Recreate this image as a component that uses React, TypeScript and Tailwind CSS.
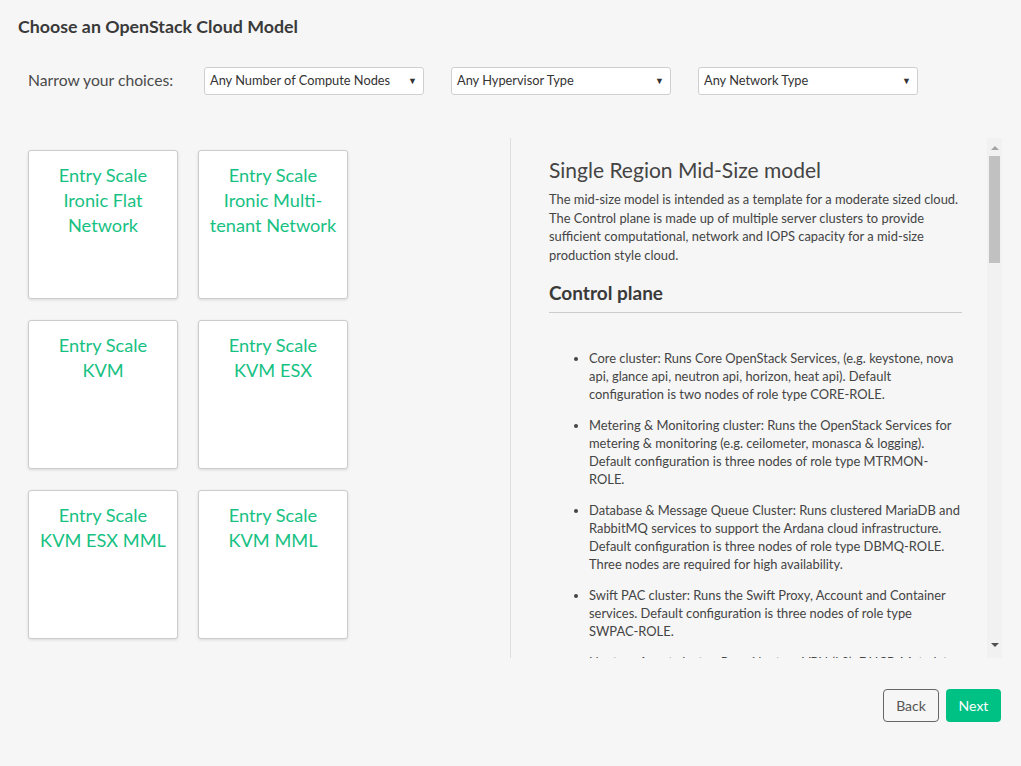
import { useState } from 'react';

const models = [
    'Entry Scale Ironic Flat Network',
    'Entry Scale Ironic Multi-tenant Network',
    'Entry Scale KVM',
    'Entry Scale KVM ESX',
    'Entry Scale KVM ESX MML',
    'Entry Scale KVM MML',
];

const filters = ['Any Number of Compute Nodes', 'Any Hypervisor Type', 'Any Network Type'];

const controlPlane = [
    'Core cluster: Runs Core OpenStack Services, (e.g. keystone, nova api, glance api, neutron api, horizon, heat api). Default configuration is two nodes of role type CORE-ROLE.',
    'Metering & Monitoring cluster: Runs the OpenStack Services for metering & monitoring (e.g. ceilometer, monasca & logging). Default configuration is three nodes of role type MTRMON-ROLE.',
    'Database & Message Queue Cluster: Runs clustered MariaDB and RabbitMQ services to support the Ardana cloud infrastructure. Default configuration is three nodes of role type DBMQ-ROLE. Three nodes are required for high availability.',
    'Swift PAC cluster: Runs the Swift Proxy, Account and Container services. Default configuration is three nodes of role type SWPAC-ROLE.',
    'Neutron Agent cluster: Runs Neutron VPN (L3), DHCP, Metadata and OpenVswitch agents. Default configuration is two nodes of role type NEUTRON-ROLE.',
];

const resources = [
    'Compute: Runs the KVM hypervisor and the nova-compute service. Default configuration is one node of role type COMPUTE-ROLE.',
    'Swift Object: Runs the Swift object server. Default configuration is three nodes of role type SWOBJ-ROLE.',
];

function Section({ title, items }: { title: string; items: string[] }) {
    return (
        <>
            <h3 className="mt-[17px] border-b border-[#cccccc] pb-[7px] text-[19px] font-bold leading-[24px] text-[#3a3a3a]">{title}</h3>
            <ul className="mt-[36px] list-disc pl-[40px] text-[12.9px] leading-[18px] text-[#444]">
                {items.map((c) => (
                    <li key={c} className="mb-[13px]">{c}</li>
                ))}
            </ul>
        </>
    );
}

export default function App() {
    const [selected, setSelected] = useState<string | null>(null);

    return (
        <div className="h-screen w-full overflow-hidden bg-[#f6f6f6] text-[#444]" style={{ fontFamily: 'Lato, "Open Sans", sans-serif' }}>
            {/* Header */}
            <h1 className="pl-[18px] pt-[15px] text-[17.8px] font-bold leading-[22px] text-[#3a3a3a]">Choose an OpenStack Cloud Model</h1>

            {/* Filters */}
            <div className="mt-[30px] flex h-[28px] items-center pl-[28px]">
                <span className="w-[176px] text-[15.7px] text-[#4a4a4a]">Narrow your choices:</span>
                <div className="flex gap-[27px]">
                    {filters.map((f) => (
                        <div key={f} className="flex h-[28px] w-[220px] items-center justify-between rounded-[3px] border border-[#cfcfcf] bg-white pl-[5px] pr-[6px] text-[12.8px] text-[#333]">
                            <span>{f}</span>
                            <span className="text-[9px] text-[#333]">▼</span>
                        </div>
                    ))}
                </div>
            </div>

            {/* Main */}
            <div className="mt-[43px] flex">
                <div className="w-[510px] pl-[28px] pt-[12px]">
                    <div className="grid w-[320px] grid-cols-[150px_150px] gap-x-[20px] gap-y-[21px]">
                        {models.map((m) => (
                            <button
                                key={m}
                                onClick={() => setSelected(m)}
                                className={`block h-[149px] rounded-[3px] border bg-white px-[10px] pt-[12px] text-center text-[18.2px] leading-[25px] text-[#17c182] shadow-[0_1px_3px_rgba(0,0,0,0.12)] ${selected === m ? 'border-[#17c182]' : 'border-[#cccccc]'}`}
                            >
                                <span className="block h-full">{m}</span>
                            </button>
                        ))}
                    </div>
                </div>

                <div className="flex h-[520px] w-[492px] border-l border-[#dedede]">
                    <div className="flex-1 overflow-hidden pl-[38px] pr-[25px] pt-[17px]">
                        <h2 className="text-[21px] font-normal leading-[30px] text-[#444]">Single Region Mid-Size model</h2>
                        <p className="mt-[5px] text-[12.9px] leading-[18.5px] text-[#444]">
                            The mid-size model is intended as a template for a moderate sized cloud. The Control plane is made up of multiple server clusters to provide sufficient computational, network and IOPS capacity for a mid-size production style cloud.
                        </p>
                        <Section title="Control plane" items={controlPlane} />
                        <Section title="Resource nodes" items={resources} />
                    </div>

                    {/* scrollbar */}
                    <div className="flex w-[15px] flex-col items-center bg-[#f1f1f1] py-[4px]">
                        <svg width="8" height="6" viewBox="0 0 8 6" className="mt-[3px]"><path d="M0 5 L4 1 L8 5 Z" fill="#a3a3a3" /></svg>
                        <div className="mt-[5px] h-[107px] w-[11px] bg-[#c1c1c1]" />
                        <div className="flex-1" />
                        <svg width="8" height="6" viewBox="0 0 8 6" className="mb-[6px]"><path d="M0 1 L4 5 L8 1 Z" fill="#505050" /></svg>
                    </div>
                </div>
            </div>

            {/* Footer */}
            <div className="mt-[31px] flex justify-end gap-[7px] pr-[20px]">
                <button className="h-[33px] w-[56px] rounded-[4px] border border-[#666] bg-transparent text-[14px] text-[#555]">Back</button>
                <button className="h-[33px] w-[55px] rounded-[4px] bg-[#00c184] text-[14px] text-white">Next</button>
            </div>
        </div>
    );
}
